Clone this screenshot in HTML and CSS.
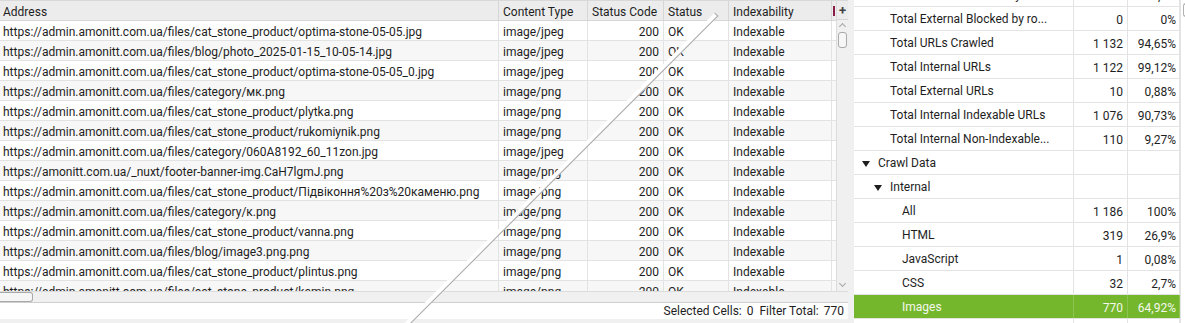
FILE: index.html
```html
<!DOCTYPE html>
<html lang="uk">
<head>
<meta charset="UTF-8">
<title>Images - Crawl Data</title>
<link rel="stylesheet" href="styles.css">
</head>
<body>

<div class="window">

  <!-- URL TABLE -->
  <section class="left">
    <div class="grid-area">
      <div class="table-view">
        <div class="row head">
          <div class="cell">Address</div>
          <div class="cell">Content Type</div>
          <div class="cell">Status Code</div>
          <div class="cell">Status</div>
          <div class="cell">Indexability</div>
          <div class="cell last"><span class="mark"></span></div>
        </div>
        <div id="rows"></div>
      </div>
      <div class="vscroll">
        <div class="plus">+</div>
        <div class="vtrack">
          <span class="chev up"></span>
          <span class="vthumb"></span>
          <span class="chev down"></span>
        </div>
      </div>
    </div>
    <div class="hscroll">
      <span class="hthumb"></span>
      <span class="chev right"></span>
    </div>
    <div class="status-bar">
      <span>Selected Cells:</span><span class="val">0</span>
      <span>Filter Total:</span><span class="val">770</span>
    </div>
  </section>

  <div class="splitter"></div>

  <!-- OVERVIEW TREE -->
  <section class="right">
    <div class="tree-view">
      <div class="tree" id="tree"></div>
    </div>
    <div class="tree-scroll"><span class="tthumb"></span></div>
  </section>

</div>

<script>
let urls = [
 ["https://admin.amonitt.com.ua/files/cat_stone_product/optima-stone-05-05.jpg","image/jpeg"],
 ["https://admin.amonitt.com.ua/files/blog/photo_2025-01-15_10-05-14.jpg","image/jpeg"],
 ["https://admin.amonitt.com.ua/files/cat_stone_product/optima-stone-05-05_0.jpg","image/jpeg"],
 ["https://admin.amonitt.com.ua/files/category/мк.png","image/png"],
 ["https://admin.amonitt.com.ua/files/cat_stone_product/plytka.png","image/png"],
 ["https://admin.amonitt.com.ua/files/cat_stone_product/rukomiynik.png","image/png"],
 ["https://admin.amonitt.com.ua/files/category/060A8192_60_11zon.jpg","image/jpeg"],
 ["https://amonitt.com.ua/_nuxt/footer-banner-img.CaH7lgmJ.png","image/png"],
 ["https://admin.amonitt.com.ua/files/cat_stone_product/Підвіконня%20з%20каменю.png","image/png"],
 ["https://admin.amonitt.com.ua/files/category/к.png","image/png"],
 ["https://admin.amonitt.com.ua/files/cat_stone_product/vanna.png","image/png"],
 ["https://admin.amonitt.com.ua/files/blog/image3.png.png","image/png"],
 ["https://admin.amonitt.com.ua/files/cat_stone_product/plintus.png","image/png"],
 ["https://admin.amonitt.com.ua/files/cat_stone_product/kamin.png","image/png"]
];

// level, label, count, percent, folder?, selected?
let tree = [
 [1,"Total Internal Blocked by ro...","0","0,0%"],
 [1,"Total External Blocked by ro...","0","0%"],
 [1,"Total URLs Crawled","1 132","94,65%"],
 [1,"Total Internal URLs","1 122","99,12%"],
 [1,"Total External URLs","10","0,88%"],
 [1,"Total Internal Indexable URLs","1 076","90,73%"],
 [1,"Total Internal Non-Indexable...","110","9,27%"],
 [0,"Crawl Data","","",true],
 [1,"Internal","","",true],
 [2,"All","1 186","100%"],
 [2,"HTML","319","26,9%"],
 [2,"JavaScript","1","0,08%"],
 [2,"CSS","32","2,7%"],
 [2,"Images","770","64,92%",false,true],
 [2,"","",""]
];

let html="";
urls.forEach(u=>{
 html += '<div class="row">'
  + '<div class="cell">'+u[0]+'</div>'
  + '<div class="cell">'+u[1]+'</div>'
  + '<div class="cell num">200</div>'
  + '<div class="cell">OK</div>'
  + '<div class="cell">Indexable</div>'
  + '<div class="cell last"></div></div>';
});
document.getElementById("rows").innerHTML = html;

let t="";
tree.forEach(r=>{
 t += '<div class="trow lvl'+r[0]+(r[5]?' selected':'')+'">'
  + '<div class="tcell label"><span class="toggle'+(r[4]?' open':'')+'"></span>'+r[1]+'</div>'
  + '<div class="tcell num">'+r[2]+'</div>'
  + '<div class="tcell num">'+r[3]+'</div></div>';
});
document.getElementById("tree").innerHTML = t;
</script>

</body>
</html>
```

FILE: styles.css
```css
*{box-sizing:border-box;}

body{
 margin:0;
 font-family:Roboto,'Noto Sans',sans-serif;
 font-size:12px;
 color:#1e1e1e;
 background:#f0f0f0;
}

.window{
 display:flex;
 width:1185px;
 height:323px;
 overflow:hidden;
}

/* LEFT */
.left{
 flex:none;
 width:848px;
 display:flex;
 flex-direction:column;
}

.grid-area{
 display:flex;
 height:291px;
 overflow:hidden;
 background:#fff;
}

.table-view{
 flex:none;
 width:836px;
 overflow:hidden;
 border-top:1px solid #d9d9d9;
}

.row{
 display:grid;
 grid-template-columns:499px 89px 76px 65px 103px 4px;
 height:20px;
 border-bottom:1px solid #e3e3e3;
}

.row:nth-child(even){background:#f7f7f7;}

.row.head{
 background:#ececec;
 border-bottom:1px solid #d6d6d6;
}

.cell{
 line-height:19px;
 padding:2px 4px 0;
 border-right:1px solid #e3e3e3;
 white-space:nowrap;
 overflow:hidden;
}

.head .cell{border-right-color:#d6d6d6;}
.cell:first-child{padding-left:3px;}
.cell.num{text-align:right;}
.cell.last{border-right:none; padding:0;}

.mark{
 display:block;
 width:2px;
 height:10px;
 margin:5px 0 0 1px;
 background:#8a1c48;
}

/* SCROLLBARS */
.vscroll{
 flex:none;
 width:12px;
 display:flex;
 flex-direction:column;
 background:#f0f0f0;
 border-left:1px solid #dcdcdc;
}

.plus{
 height:20px;
 border-top:1px solid #d9d9d9;
 border-bottom:1px solid #d6d6d6;
 background:#ececec;
 text-align:center;
 font-weight:bold;
 font-size:13px;
 line-height:19px;
 color:#444;
}

.vtrack{
 flex:1;
 display:flex;
 flex-direction:column;
 align-items:center;
}

.chev{
 width:5px;
 height:5px;
 border-left:1px solid #a6a6a6;
 border-top:1px solid #a6a6a6;
}

.chev.up{transform:rotate(45deg); margin-top:4px;}
.chev.down{transform:rotate(225deg); margin-top:auto; margin-bottom:5px;}

.vthumb{
 width:9px;
 height:16px;
 margin-top:3px;
 border:1px solid #a9a9a9;
 border-radius:3px;
 background:#f6f6f6;
}

.hscroll{
 height:12px;
 display:flex;
 align-items:center;
 background:#f0f0f0;
 border-top:1px solid #dcdcdc;
 border-bottom:1px solid #cfcfcf;
 padding-right:14px;
}

.hthumb{
 width:33px;
 height:10px;
 border:1px solid #a9a9a9;
 border-left:none;
 border-radius:0 3px 3px 0;
 background:#f6f6f6;
}

.chev.right{transform:rotate(135deg); margin-left:auto;}

.status-bar{
 height:16px;
 background:#fff;
 display:flex;
 justify-content:flex-end;
 align-items:center;
 gap:5px;
 padding-right:3px;
}

.status-bar .val{margin-right:1px;}

.splitter{
 flex:none;
 width:6px;
 background:#f0f0f0;
}

/* RIGHT */
.right{
 flex:1;
 display:flex;
 background:#fff;
}

.tree-view{
 flex:none;
 width:326px;
 overflow:hidden;
}

.tree{margin-top:-17px;}

.trow{
 display:grid;
 grid-template-columns:220px 54px 52px;
 height:24px;
 border-bottom:1px solid #e3e3e3;
}

.tcell{
 line-height:23px;
 padding-top:2px;
 border-right:1px solid #e3e3e3;
 white-space:nowrap;
 overflow:hidden;
}

.tcell.num{text-align:right; padding-right:3px;}
.tcell.num:nth-child(2){padding-right:4px;}

.label{display:flex; align-items:center;}
.lvl0 .label{padding-left:8px;}
.lvl1 .label{padding-left:20px;}
.lvl2 .label{padding-left:32px;}

.toggle{width:16px; flex:none; height:6px;}
.toggle.open::before{
 content:"";
 display:block;
 width:0;
 height:0;
 border-left:4px solid transparent;
 border-right:4px solid transparent;
 border-top:6px solid #1e1e1e;
}

.trow.selected{
 background:#74b72c;
 color:#f4f8ee;
}

.trow.selected .tcell{border-right-color:#8cc352;}

.tree-scroll{
 flex:1;
 background:#fff;
 border-left:1px solid #e3e3e3;
}

.tthumb{
 display:block;
 width:4px;
 height:14px;
 margin:3px 0 0 2px;
 border:1px solid #b0b0b0;
 border-right:none;
 border-radius:3px 0 0 3px;
}
```
